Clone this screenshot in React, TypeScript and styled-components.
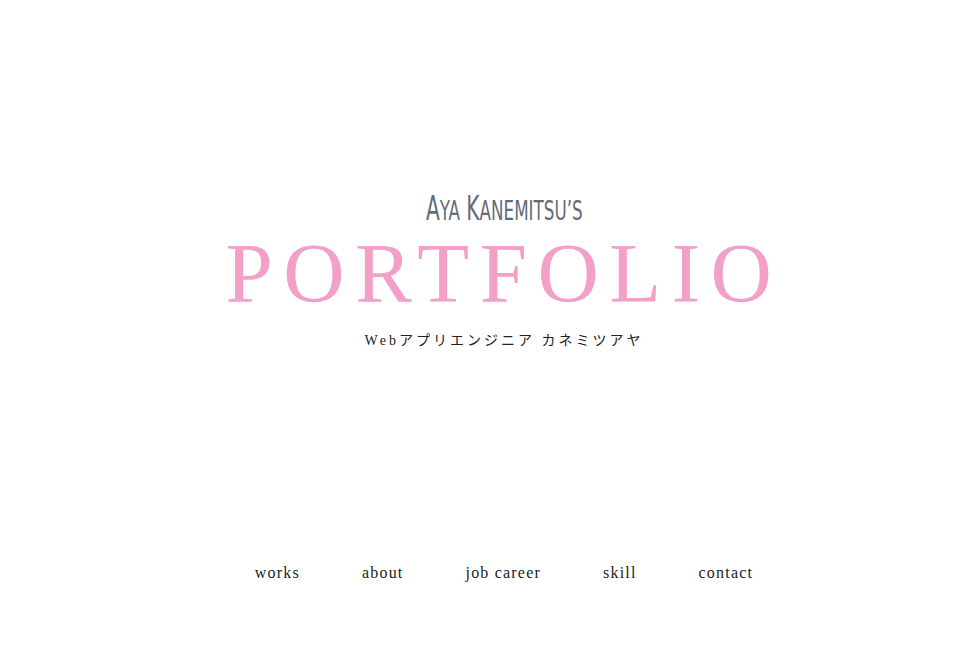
import React from "react";
import styled, { createGlobalStyle } from "styled-components";

const Global = createGlobalStyle`
  html, body { margin: 0; padding: 0; background: #fff; }
  body { font-family: "Liberation Serif", serif; }
`;

const Page = styled.main`
  height: 666px;
  display: flex;
  flex-direction: column;
  align-items: center;
  padding-left: 28px;
  box-sizing: border-box;
`;

const Hero = styled.header`
  margin-top: 192px;
  display: flex;
  flex-direction: column;
  align-items: center;
`;

const Owner = styled.div`
  margin-bottom: 2px;
  font-family: "DejaVu Sans Condensed", "DejaVu Sans", sans-serif;
  font-weight: normal;
  font-size: 33px;
  line-height: 34px;
  color: #646c7a;
  transform: scaleX(0.68);
  white-space: nowrap;
`;

const Small = styled.span`
  font-size: 0.83em;
  text-transform: uppercase;
`;

const Title = styled.h1`
  margin: 0;
  font-family: "Liberation Serif", serif;
  font-weight: normal;
  font-size: 85px;
  line-height: 86px;
  letter-spacing: 10.5px;
  color: #f3a0c8;
`;

const Subtitle = styled.p`
  margin: 13px 0 0;
  font-family: "Liberation Serif", "Noto Sans CJK JP", serif;
  font-size: 14px;
  letter-spacing: 3px;
  color: #222;
`;

const Nav = styled.nav`
  margin-top: auto;
  margin-bottom: 84px;
  display: flex;
  gap: 62px;
`;

const NavItem = styled.a`
  font-family: "Liberation Serif", serif;
  font-size: 16px;
  letter-spacing: 1.2px;
  color: #222;
  text-decoration: none;
`;

export default function App() {
  return (
    <>
      <Global />
      <Page>
        <Hero>
          <Owner>
            A<Small>ya</Small> K<Small>anemitsu’s</Small>
          </Owner>
          <Title>PORTFOLIO</Title>
          <Subtitle>Webアプリエンジニア カネミツアヤ</Subtitle>
        </Hero>
        <Nav>
          {["works", "about", "job career", "skill", "contact"].map((t) => (
            <NavItem key={t} href="#">{t}</NavItem>
          ))}
        </Nav>
      </Page>
    </>
  );
}
